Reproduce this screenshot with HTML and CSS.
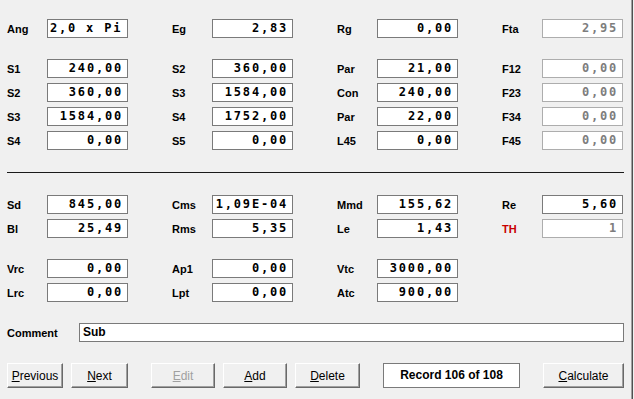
FILE: index.html
```html
<!DOCTYPE html>
<html lang="en">
<head>
    <meta charset="UTF-8">
    <title>Speaker Record</title>
    <link rel="stylesheet" href="styles.css">
</head>
<body>
    <div class="window">
        <!-- angle / enclosure -->
        <div class="block first">
            <div class="field"><span class="lbl">Ang</span><span class="val left">2,0 x Pi</span></div>
            <div class="field"><span class="lbl">Eg</span><span class="val">2,83</span></div>
            <div class="field"><span class="lbl">Rg</span><span class="val">0,00</span></div>
            <div class="field"><span class="lbl">Fta</span><span class="val off">2,95</span></div>
        </div>

        <div class="block gap21">
            <div class="field"><span class="lbl">S1</span><span class="val">240,00</span></div>
            <div class="field"><span class="lbl">S2</span><span class="val">360,00</span></div>
            <div class="field"><span class="lbl">Par</span><span class="val">21,00</span></div>
            <div class="field"><span class="lbl">F12</span><span class="val off">0,00</span></div>

            <div class="field"><span class="lbl">S2</span><span class="val">360,00</span></div>
            <div class="field"><span class="lbl">S3</span><span class="val">1584,00</span></div>
            <div class="field"><span class="lbl">Con</span><span class="val">240,00</span></div>
            <div class="field"><span class="lbl">F23</span><span class="val off">0,00</span></div>

            <div class="field"><span class="lbl">S3</span><span class="val">1584,00</span></div>
            <div class="field"><span class="lbl">S4</span><span class="val">1752,00</span></div>
            <div class="field"><span class="lbl">Par</span><span class="val">22,00</span></div>
            <div class="field"><span class="lbl">F34</span><span class="val off">0,00</span></div>

            <div class="field"><span class="lbl">S4</span><span class="val">0,00</span></div>
            <div class="field"><span class="lbl">S5</span><span class="val">0,00</span></div>
            <div class="field"><span class="lbl">L45</span><span class="val">0,00</span></div>
            <div class="field"><span class="lbl">F45</span><span class="val off">0,00</span></div>
        </div>

        <div class="divider"></div>

        <!-- driver parameters -->
        <div class="block gap22">
            <div class="field"><span class="lbl">Sd</span><span class="val">845,00</span></div>
            <div class="field"><span class="lbl">Cms</span><span class="val">1,09E-04</span></div>
            <div class="field"><span class="lbl">Mmd</span><span class="val">155,62</span></div>
            <div class="field"><span class="lbl">Re</span><span class="val">5,60</span></div>

            <div class="field"><span class="lbl">Bl</span><span class="val">25,49</span></div>
            <div class="field"><span class="lbl">Rms</span><span class="val">5,35</span></div>
            <div class="field"><span class="lbl">Le</span><span class="val">1,43</span></div>
            <div class="field"><span class="lbl red">TH</span><span class="val off">1</span></div>
        </div>

        <div class="block gap21">
            <div class="field"><span class="lbl">Vrc</span><span class="val">0,00</span></div>
            <div class="field"><span class="lbl">Ap1</span><span class="val">0,00</span></div>
            <div class="field"><span class="lbl">Vtc</span><span class="val">3000,00</span></div>
            <div class="field"></div>

            <div class="field"><span class="lbl">Lrc</span><span class="val">0,00</span></div>
            <div class="field"><span class="lbl">Lpt</span><span class="val">0,00</span></div>
            <div class="field"><span class="lbl">Atc</span><span class="val">900,00</span></div>
            <div class="field"></div>
        </div>

        <div class="comment-row">
            <span class="comment-lbl">Comment</span>
            <span class="comment-box">Sub</span>
        </div>

        <div class="buttons">
            <button class="btn prev"><u>P</u>revious</button>
            <button class="btn next"><u>N</u>ext</button>
            <button class="btn w64 ml23" disabled><u>E</u>dit</button>
            <button class="btn w64 ml8"><u>A</u>dd</button>
            <button class="btn w65 ml8"><u>D</u>elete</button>
            <div class="record">Record 106 of 108</div>
            <button class="btn calc"><u>C</u>alculate</button>
        </div>
    </div>
</body>
</html>
```

FILE: styles.css
```css
html, body {
    margin: 0;
    padding: 0;
    background-color: #f0f0f0;
}

body {
    font-family: "Liberation Sans", Arial, sans-serif;
    font-size: 11px;
    color: #000;
}

.window {
    width: 631px;
    height: 399px;
    border-right: 1px solid #a0a0a0;
    box-shadow: 1px 0 0 #505050;
    overflow: hidden;
}

.block {
    display: grid;
    grid-template-columns: repeat(4, 165px);
    row-gap: 5px;
    padding-left: 7px;
}

.first {
    margin-top: 19px;
}

.gap21 {
    margin-top: 21px;
}

.gap22 {
    margin-top: 22px;
}

.field {
    display: flex;
    align-items: center;
    height: 19px;
}

.lbl {
    width: 40px;
    font-weight: bold;
    font-size: 11px;
}

.lbl.red {
    color: #c80000;
}

.val {
    box-sizing: border-box;
    width: 81px;
    height: 19px;
    line-height: 17px;
    border: 1px solid #7a7a7a;
    background: #fff;
    text-align: right;
    padding-right: 4px;
    font-family: "DejaVu Sans Mono", monospace;
    font-weight: bold;
    font-size: 12px;
    letter-spacing: 1.8px;
    white-space: nowrap;
    overflow: hidden;
}

.val.left {
    text-align: left;
    padding-left: 2px;
}

.val.off {
    color: #7d7d7d;
    border-color: #adadad;
}

.divider {
    margin: 22px 7px 0 7px;
    height: 1px;
    background: #1a1a1a;
}

.comment-row {
    display: flex;
    align-items: center;
    margin-top: 21px;
    padding-left: 7px;
}

.comment-lbl {
    width: 72px;
    font-weight: bold;
}

.comment-box {
    box-sizing: border-box;
    width: 545px;
    height: 19px;
    line-height: 17px;
    border: 1px solid #7a7a7a;
    background: #fff;
    padding-left: 3px;
    font-weight: bold;
    font-size: 12px;
}

.buttons {
    display: flex;
    align-items: center;
    margin-top: 21px;
    padding-left: 7px;
}

.btn {
    box-sizing: border-box;
    height: 25px;
    padding: 0;
    font-family: "Liberation Sans", Arial, sans-serif;
    font-size: 12px;
    color: #000;
    background: #f0f0f0;
    border: 1px solid;
    border-color: #ffffff #696969 #696969 #ffffff;
    box-shadow: inset -1px -1px 0 #a0a0a0;
}

.btn:disabled {
    color: #a0a0a0;
}

.prev {
    width: 56px;
}

.next {
    width: 57px;
    margin-left: 8px;
}

.w64 {
    width: 64px;
}

.w65 {
    width: 65px;
}

.ml8 {
    margin-left: 8px;
}

.ml23 {
    margin-left: 23px;
}

.record {
    box-sizing: border-box;
    width: 137px;
    height: 25px;
    line-height: 23px;
    margin-left: 23px;
    border: 1px solid #7a7a7a;
    background: #fff;
    text-align: center;
    font-weight: bold;
    font-size: 12px;
}

.calc {
    width: 81px;
    margin-left: 23px;
}
```
